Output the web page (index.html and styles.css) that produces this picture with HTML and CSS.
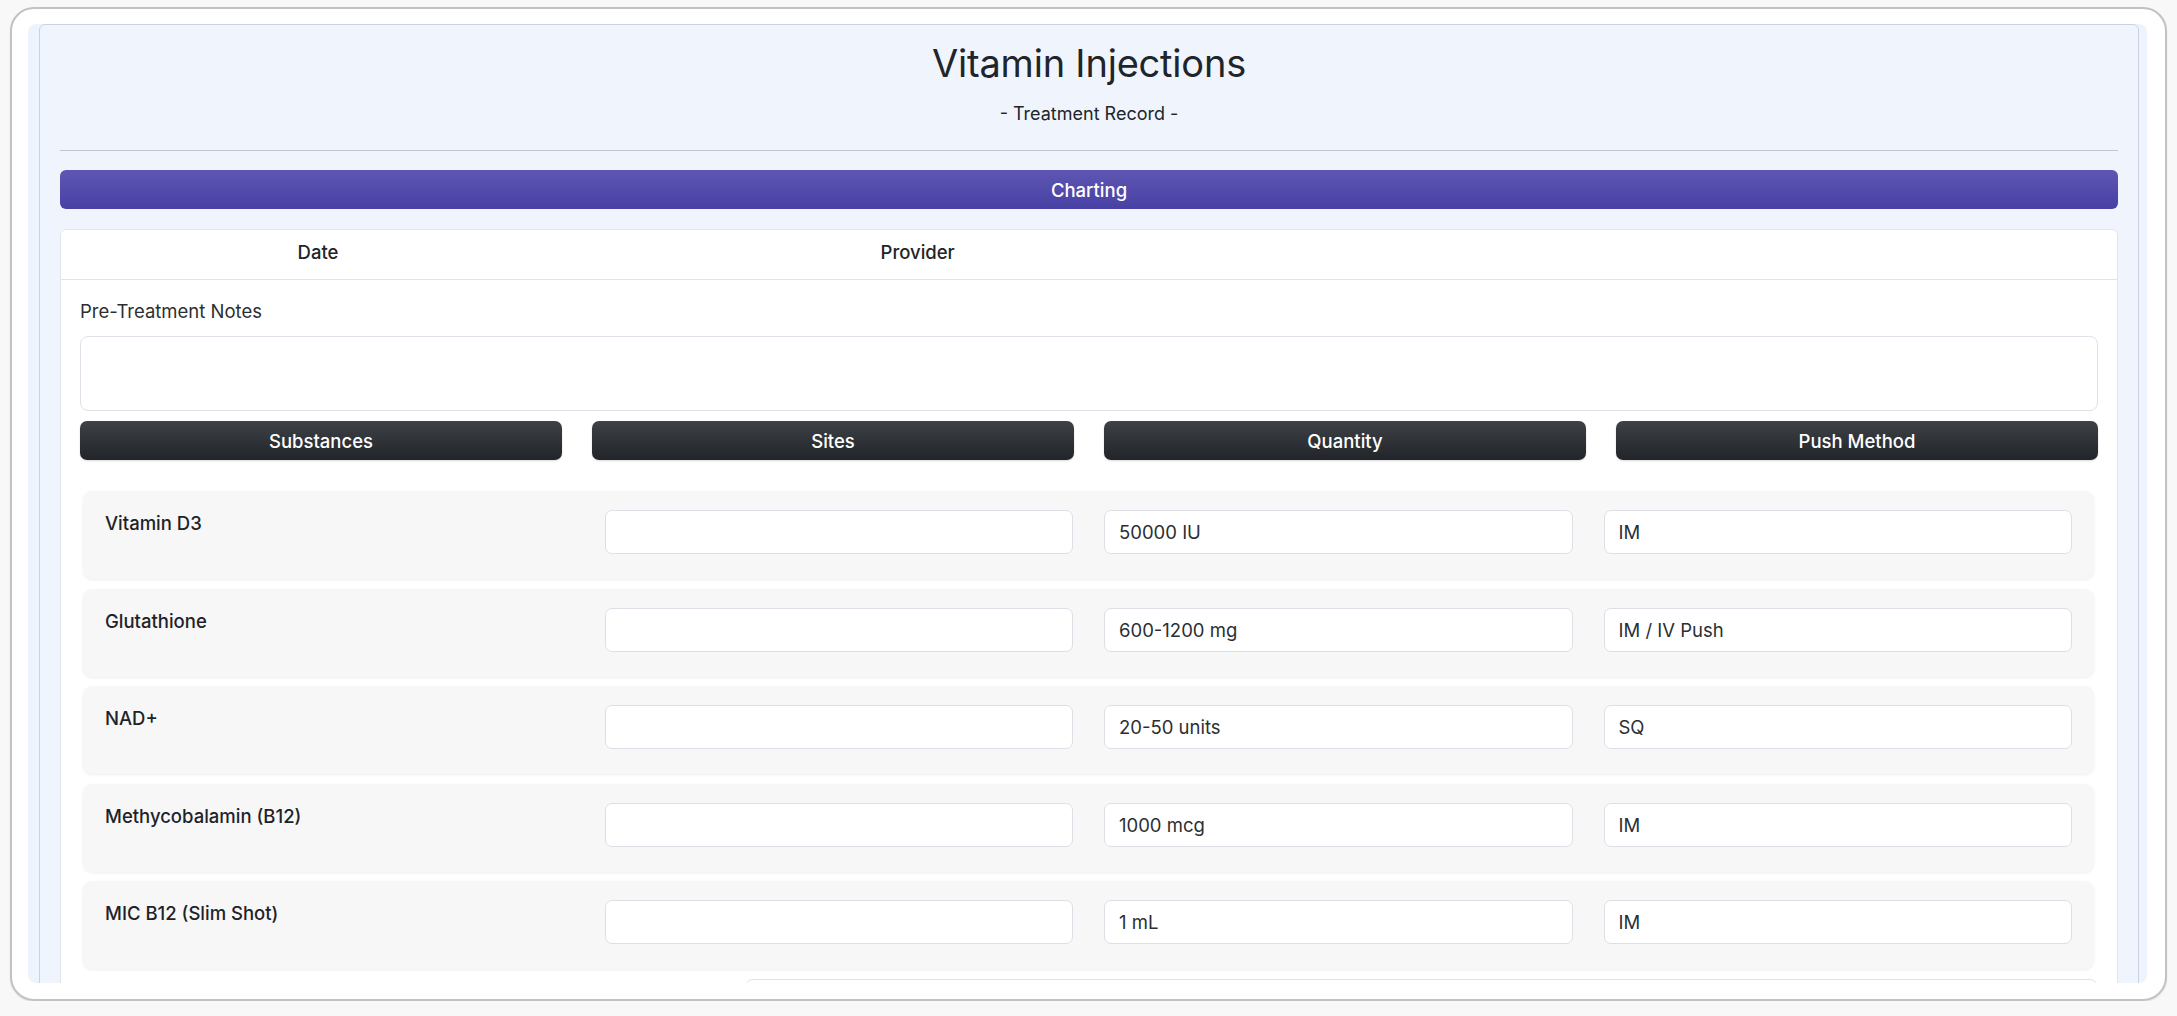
FILE: index.html
```html
<!DOCTYPE html>
<html lang="en">
<head>
<meta charset="utf-8">
<title>Vitamin Injections - Treatment Record</title>
<link rel="stylesheet" href="styles.css">
</head>
<body>
<div class="frame">
  <div class="scroll">
    <div class="panel">
      <h1 class="title">Vitamin Injections</h1>
      <p class="subtitle">- Treatment Record -</p>
      <hr class="rule">
      <div class="section-bar">Charting</div>
      <div class="card">
        <div class="card-head">
          <div class="th">Date</div>
          <div class="th">Provider</div>
          <div class="th"></div>
        </div>
        <div class="card-body">
          <label class="notes-label">Pre-Treatment Notes</label>
          <textarea class="notes"></textarea>
          <div class="col-heads">
            <div class="col-head">Substances</div>
            <div class="col-head">Sites</div>
            <div class="col-head">Quantity</div>
            <div class="col-head">Push Method</div>
          </div>
          <div class="sub-row">
            <div class="sub-name">Vitamin D3</div>
            <input class="field" type="text" value="">
            <input class="field" type="text" value="50000 IU">
            <input class="field" type="text" value="IM">
          </div>
          <div class="sub-row">
            <div class="sub-name">Glutathione</div>
            <input class="field" type="text" value="">
            <input class="field" type="text" value="600-1200 mg">
            <input class="field" type="text" value="IM / IV Push">
          </div>
          <div class="sub-row">
            <div class="sub-name">NAD+</div>
            <input class="field" type="text" value="">
            <input class="field" type="text" value="20-50 units">
            <input class="field" type="text" value="SQ">
          </div>
          <div class="sub-row">
            <div class="sub-name">Methycobalamin (B12)</div>
            <input class="field" type="text" value="">
            <input class="field" type="text" value="1000 mcg">
            <input class="field" type="text" value="IM">
          </div>
          <div class="sub-row">
            <div class="sub-name">MIC B12 (Slim Shot)</div>
            <input class="field" type="text" value="">
            <input class="field" type="text" value="1 mL">
            <input class="field" type="text" value="IM">
          </div>
          <div class="next-field"></div>
        </div>
      </div>
    </div>
  </div>
</div>
</body>
</html>
```

FILE: styles.css
```css
* {
  box-sizing: border-box;
}

html, body {
  margin: 0;
  padding: 0;
  background: #f8f8f8;
  font-family: Inter, "Liberation Sans", Arial, sans-serif;
  color: #212529;
  overflow: hidden;
}

.frame {
  margin: 7px 10px 0 10px;
  height: 994px;
  background: #ffffff;
  border: 2px solid #c2c2c2;
  border-radius: 24px;
  padding: 15px 18px 16px 16px;
  box-shadow: 0 1px 2px rgba(0, 0, 0, 0.08);
}

.scroll {
  height: 959px;
  overflow: hidden;
  background: #eef4fd;
  border-radius: 8px;
  padding: 0 8px 0 11px;
}

.panel {
  background: #f0f5fd;
  border: 1px solid #cbd1e2;
  border-radius: 6px;
  padding: 15px 20px 40px 20px;
  min-height: 1200px;
}

.title {
  margin: 0;
  text-align: center;
  font-size: 38px;
  line-height: 46px;
  font-weight: 400;
  color: #212529;
  letter-spacing: -0.2px;
}

.subtitle {
  margin: 14px 0 0 0;
  text-align: center;
  font-size: 18px;
  line-height: 27px;
  color: #212529;
}

.rule {
  margin: 23px 0 0 0;
  border: 0;
  border-top: 1px solid #c3c5ca;
  height: 0;
}

.section-bar {
  margin-top: 19px;
  height: 39px;
  border-radius: 6px;
  background: linear-gradient(to bottom, #5d56b2, #4841a5);
  color: #ffffff;
  font-size: 18.5px;
  font-weight: 500;
  display: flex;
  align-items: center;
  justify-content: center;
}

.card {
  margin-top: 20px;
  background: #ffffff;
  border: 1px solid #e2e5ea;
  border-radius: 6px;
}

.card-head {
  display: grid;
  grid-template-columns: 25% 33.333% 1fr;
  height: 50px;
  padding-bottom: 5px;
  align-items: center;
  border-bottom: 1px solid #e0e3e8;
}

.th {
  text-align: center;
  font-size: 18.5px;
  font-weight: 500;
  color: #212529;
}

.card-body {
  padding: 18px 19px 0 19px;
}

.notes-label {
  display: block;
  font-size: 18.5px;
  line-height: 27px;
  color: #2b2f33;
}

.notes {
  display: block;
  width: 100%;
  height: 75px;
  margin-top: 11px;
  border: 1px solid #dfe2e8;
  border-radius: 8px;
  background: #ffffff;
  resize: none;
  font: inherit;
}

.col-heads {
  margin-top: 10px;
  display: grid;
  grid-template-columns: repeat(4, 1fr);
  column-gap: 30px;
  margin-bottom: 31px;
}

.col-head {
  height: 39px;
  border-radius: 7px;
  background: linear-gradient(to bottom, #3e4146, #212428);
  color: #ffffff;
  font-size: 18.5px;
  font-weight: 500;
  display: flex;
  align-items: center;
  justify-content: center;
  box-shadow: 0 1px 2px rgba(0, 0, 0, 0.15);
}

.sub-row {
  margin: 0 4px 9.5px 3px;
  background: #f7f7f8;
  border-radius: 9px;
  box-shadow: 0 1px 3px rgba(0, 0, 0, 0.07);
  padding: 19px 22px 25px 22px;
  display: grid;
  grid-template-columns: repeat(4, 1fr);
  column-gap: 31px;
  align-items: start;
}

.sub-name {
  font-size: 18.5px;
  line-height: 27px;
  font-weight: 500;
  color: #1f2327;
}

.field {
  display: block;
  width: 100%;
  height: 44px;
  border: 1px solid #dcdfe6;
  border-radius: 7px;
  background: #ffffff;
  padding: 0 14px;
  font-family: inherit;
  font-size: 18.5px;
  color: #2b2f33;
  outline: none;
}

.next-field {
  margin-left: 665px;
  height: 70px;
  border: 1px solid #dfe2e8;
  border-radius: 8px;
  background: #ffffff;
}
```
